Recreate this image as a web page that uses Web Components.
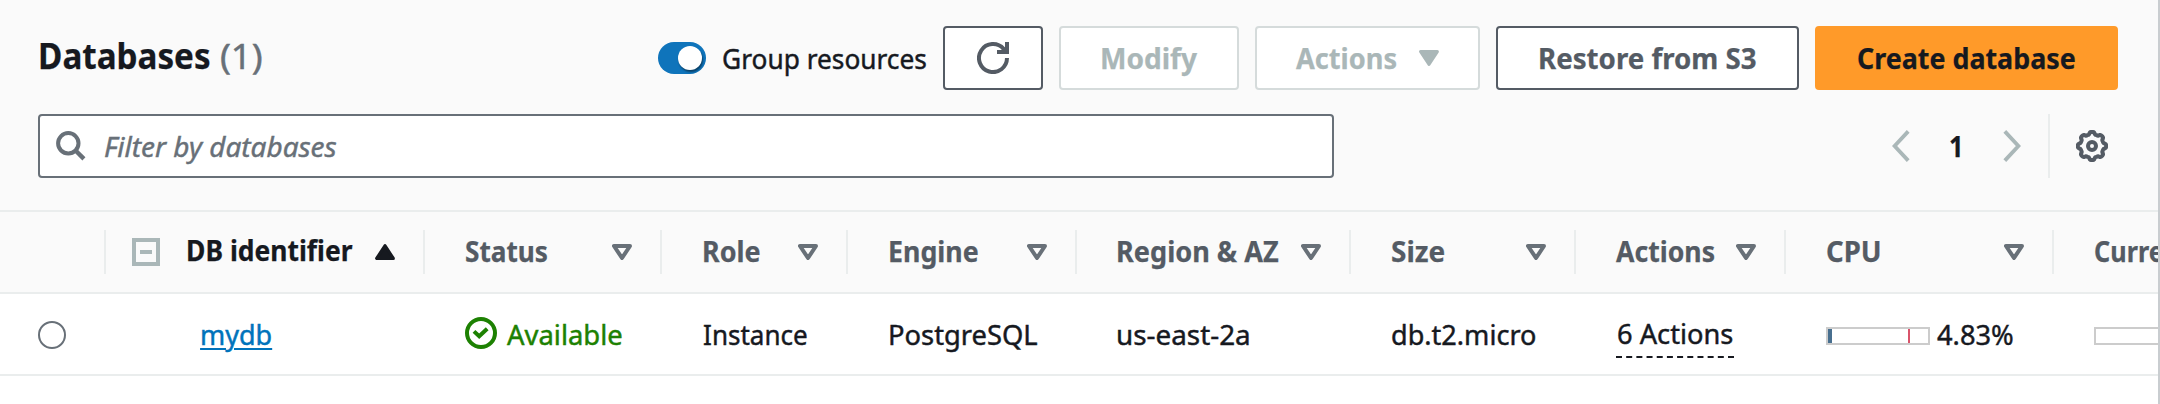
<!DOCTYPE html>
<html lang="en">
<head>
<meta charset="utf-8">
<title>Databases</title>
<style>
html, body { margin: 0; background: #fff; }
body { width: 2160px; height: 404px; overflow: hidden; font: 28px/38px "Noto Sans", "Open Sans", sans-serif; color: #16191f; }
</style>
</head>
<body>
<db-panel></db-panel>
<script>
const define = (name, html, setup) => {
  const template = document.createElement('template');
  template.innerHTML = html;
  customElements.define(name, class extends HTMLElement {
    connectedCallback() {
      if (this.shadowRoot) return;
      this.attachShadow({ mode: 'open' }).append(template.content.cloneNode(true));
      if (setup) setup(this, this.shadowRoot);
    }
  });
};

/* A single-line label condensed or widened so that its ink spans exactly `w` pixels. */
const ctx = document.createElement('canvas').getContext('2d');
define('fit-text', `<style>
  :host { display: inline-block; white-space: nowrap; flex: none; }
  span { display: inline-block; transform-origin: 0 0; -webkit-text-stroke: .45px currentColor; }
  span.bold { -webkit-text-stroke: .25px currentColor; }
  :host([underline]) span { text-decoration: underline; text-decoration-thickness: 2px; text-underline-offset: 3px; }
</style><span><slot></slot></span>`, (host, root) => {
  const cs = getComputedStyle(host), w = +host.getAttribute('w'), span = root.querySelector('span');
  ctx.font = `${cs.fontStyle} ${cs.fontWeight} ${cs.fontSize} ${cs.fontFamily}`;
  const m = ctx.measureText(host.textContent);
  const scale = w / (m.actualBoundingBoxRight + m.actualBoundingBoxLeft);
  host.style.width = w + 'px';
  span.classList.toggle('bold', +cs.fontWeight >= 700);
  span.style.transform = `translateX(${m.actualBoundingBoxLeft * scale}px) scaleX(${scale})`;
});

/* Scalloped ring of the settings gear: eight soft teeth around a 32px box. */
let gear = '';
for (let i = 0; i < 144; i++) {
  const a = i / 144 * Math.PI * 2;
  const r = 12.9 + 1.25 * Math.tanh(2.2 * Math.cos(8 * a));
  gear += (i ? 'L' : 'M') + (16 + r * Math.cos(a)).toFixed(2) + ' ' + (16 + r * Math.sin(a)).toFixed(2);
}

const icons = {
  gear: [32, 32, `<path d="${gear}z" fill="none" stroke="currentColor" stroke-width="4" stroke-linejoin="round"/><circle cx="16" cy="16" r="4" fill="none" stroke="currentColor" stroke-width="4"/>`],
  refresh: [32, 32, '<path d="M30 16A14 14 0 1 1 26.6 6.9L29.5 10" fill="none" stroke="currentColor" stroke-width="4"/><path d="M20 10h10V0" fill="none" stroke="currentColor" stroke-width="4"/>'],
  search: [30, 30, '<circle cx="12.3" cy="12.3" r="10.2" fill="none" stroke="currentColor" stroke-width="4"/><path d="M19.3 19.3l8.6 8.6" stroke="currentColor" stroke-width="4.4"/>'],
  prev: [18, 32, '<path d="M16.2 1.4L2.6 16l13.6 14.6" fill="none" stroke="currentColor" stroke-width="3.8"/>'],
  next: [18, 32, '<path d="M1.8 1.4L15.4 16 1.8 30.6" fill="none" stroke="currentColor" stroke-width="3.8"/>'],
  down: [20, 16, '<path d="M1.6 1.6h16.8L10 14.4z" fill="currentColor" stroke="currentColor" stroke-width="3" stroke-linejoin="round"/>'],
  up: [20, 16, '<path d="M1.6 14.4h16.8L10 1.6z" fill="currentColor" stroke="currentColor" stroke-width="3" stroke-linejoin="round"/>'],
  sort: [20, 16, '<path d="M2 2h16l-8 12z" fill="none" stroke="currentColor" stroke-width="4" stroke-linejoin="round"/>'],
  check: [32, 32, '<circle cx="16" cy="16" r="14" fill="none" stroke="currentColor" stroke-width="4"/><path d="M9 14.4l5.2 4.9 8-7.6" fill="none" stroke="currentColor" stroke-width="4"/>']
};
define('ui-icon', `<style>:host { display: block; flex: none; } svg { display: block; }</style><svg></svg>`, (host, root) => {
  const svg = root.querySelector('svg');
  const [w, h, body] = icons[host.getAttribute('name')];
  svg.setAttribute('viewBox', `0 0 ${w} ${h}`);
  svg.setAttribute('width', w);
  svg.setAttribute('height', h);
  svg.innerHTML = body;
});

define('ui-button', `<style>
  :host { display: flex; box-sizing: border-box; height: 64px; flex: none; align-items: center; justify-content: center; gap: 23px;
    border: 2px solid #545b64; border-radius: 4px; background: #fff; color: #545b64; font-weight: 700; }
  :host([disabled]) { border-color: #d5dbdb; color: #aab7b8; }
  :host([primary]) { border-color: #ff9a29; background: #ff9a29; color: #16191f; }
</style><slot></slot>`);

define('ui-toggle', `<style>
  :host { display: flex; align-items: center; margin-right: 1px; }
  i { box-sizing: border-box; width: 48px; height: 32px; padding: 4px; border-radius: 16px; background: #0f74bb; display: flex; justify-content: flex-end; margin-right: 17px; }
  b { width: 24px; height: 24px; border-radius: 50%; background: #fff; box-shadow: 1px 2px 2px rgba(0,0,0,.45); }
</style><i><b></b></i><slot></slot>`);

define('ui-search', `<style>
  :host { display: flex; align-items: center; box-sizing: border-box; width: 1296px; height: 64px; padding-left: 16px; gap: 19px;
    border: 2px solid #687078; border-radius: 4px; background: #fff; color: #687078; font-style: italic; }
</style><ui-icon name="search"></ui-icon><slot></slot>`);

define('ui-pager', `<style>
  :host { display: flex; align-items: center; height: 64px; color: #aab7b8; }
  fit-text { margin: 0 43px 0 40px; color: #16191f; font-weight: 700; }
  .line { width: 2px; height: 64px; margin: 0 26px 0 27px; background: #eaeded; }
  .gear { color: #545b64; margin-right: 10px; }
</style><ui-icon name="prev"></ui-icon><fit-text w="10">1</fit-text><ui-icon name="next"></ui-icon><span class="line"></span><ui-icon class="gear" name="gear"></ui-icon>`);

define('table-head', `<style>
  :host { display: flex; align-items: center; height: 80px; box-sizing: border-box; padding: 0 0 0 41px; color: #545b64; font-weight: 700; }
  .in { flex: 1; min-width: 0; display: flex; align-items: center; justify-content: space-between; }
  .text { display: flex; align-items: center; margin-top: -2px; }
  ui-icon { color: #687078; margin-right: 28px; }
  .sep { width: 2px; height: 44px; background: #eaeded; flex: none; }
  :host([last]) { overflow: hidden; }
  :host([last]) .sep { display: none; }
  :host([sorted]) { padding-left: 26px; color: #16191f; }
  :host([sorted]) .text { margin-top: -4px; }
  :host([sorted]) ui-icon { color: #16191f; }
</style><div class="in"><div class="text"><slot></slot></div></div><span class="sep"></span>`, (host, root) => {
  if (host.hasAttribute('last') || host.hasAttribute('blank')) return;
  const icon = document.createElement('ui-icon');
  icon.setAttribute('name', host.hasAttribute('sorted') ? 'up' : 'sort');
  root.querySelector('.in').append(icon);
});

define('collapse-box', `<style>
  :host { display: flex; align-items: center; justify-content: center; box-sizing: border-box; width: 28px; height: 28px; border: 4px solid #aab7b8; margin: 4px 28px 0 0; }
  i { width: 12px; height: 4px; background: #aab7b8; }
</style><i></i>`);

define('table-cell', `<style>
  :host { display: flex; align-items: center; height: 80px; box-sizing: border-box; padding-left: 42px; min-width: 0; }
</style><slot></slot>`);

define('radio-dot', `<style>:host { display: block; box-sizing: border-box; width: 28px; height: 28px; border: 2px solid #687078; border-radius: 50%; background: #fff; margin-top: 2px; }</style>`);

define('status-ok', `<style>
  :host { display: flex; align-items: center; gap: 10px; color: #1d8102; }
  ui-icon { margin-top: -2px; }
</style><ui-icon name="check"></ui-icon><slot></slot>`);

define('usage-bar', `<style>
  :host { display: flex; box-sizing: border-box; width: 104px; height: 18px; border: 2px solid #ccc; background: #fff; flex: none; margin: 4px 7px 0 -2px; }
  .used { width: 4px; background: #486f8f; } .limit { width: 2px; margin-left: 76px; background: #d9536a; }
  :host([empty]) i { display: none; }
</style><i class="used"></i><i class="limit"></i>`);

define('db-table', `<style>
  :host { display: block; border-top: 2px solid #eaeded; background: #fff; }
  .row { display: grid; grid-template-columns: 106px 319px 237px 186px 229px 274px 225px 210px 268px 104px; border-bottom: 2px solid #eaeded; }
  .head { background: #fafafa; }
  .link { color: #0073bb; }
  .actions { border-bottom: 2px dashed #16191f; height: 38px; width: 118px; margin: 8px 0 0 -1px; line-height: 30px; }
</style>
<div class="row head">
  <table-head blank></table-head>
  <table-head sorted><collapse-box></collapse-box><fit-text w="165">DB identifier</fit-text></table-head>
  <table-head><fit-text w="81">Status</fit-text></table-head>
  <table-head style="padding-left:42px"><fit-text w="56">Role</fit-text></table-head>
  <table-head style="padding-left:42px"><fit-text w="88">Engine</fit-text></table-head>
  <table-head><fit-text w="160.5">Region &amp; AZ</fit-text></table-head>
  <table-head><fit-text w="52.5">Size</fit-text></table-head>
  <table-head style="padding-left:40px"><fit-text w="98">Actions</fit-text></table-head>
  <table-head><fit-text w="52.5">CPU</fit-text></table-head>
  <table-head last><fit-text w="96">Current</fit-text></table-head>
</div>
<div class="row">
  <table-cell style="padding-left:38px"><radio-dot></radio-dot></table-cell>
  <table-cell style="padding-left:96px"><fit-text class="link" underline w="69">mydb</fit-text></table-cell>
  <table-cell style="padding-left:40px"><status-ok><fit-text w="115">Available</fit-text></status-ok></table-cell>
  <table-cell><fit-text w="103">Instance</fit-text></table-cell>
  <table-cell><fit-text w="147">PostgreSQL</fit-text></table-cell>
  <table-cell style="padding-left:41px"><fit-text w="131">us-east-2a</fit-text></table-cell>
  <table-cell style="padding-left:41px"><fit-text w="143.5">db.t2.micro</fit-text></table-cell>
  <table-cell style="padding-left:41px"><div class="actions"><fit-text w="115" style="margin-left:2px">6 Actions</fit-text></div></table-cell>
  <table-cell><usage-bar></usage-bar><fit-text w="75.5">4.83%</fit-text></table-cell>
  <table-cell><usage-bar empty></usage-bar></table-cell>
</div>`);

define('db-panel', `<style>
  :host { display: block; box-sizing: border-box; width: 2160px; height: 404px; overflow: hidden; border-right: 2px solid #c9cdd0; background: #fff; }
  header { height: 210px; box-sizing: border-box; padding: 26px 40px 0 38px; background: #fafafa; }
  .bar { display: flex; align-items: center; gap: 16px; }
  .title { display: flex; gap: 11px; flex: 1; padding-left: 2px; font-size: 35px; line-height: 48px; margin-top: -4px; }
  .count { color: #687078; }
  .filters { display: flex; justify-content: space-between; margin-top: 24px; }
</style>
<header>
  <div class="bar">
    <div class="title"><fit-text w="170" style="font-weight:700">Databases</fit-text><fit-text class="count" w="41">(1)</fit-text></div>
    <ui-toggle><fit-text w="203.5">Group resources</fit-text></ui-toggle>
    <ui-button style="width:100px"><ui-icon name="refresh"></ui-icon></ui-button>
    <ui-button disabled style="width:180px"><fit-text w="95">Modify</fit-text></ui-button>
    <ui-button disabled style="width:225px"><fit-text w="100">Actions</fit-text><ui-icon name="down"></ui-icon></ui-button>
    <ui-button style="width:303px"><fit-text w="215.5">Restore from S3</fit-text></ui-button>
    <ui-button primary style="width:303px"><fit-text w="217">Create database</fit-text></ui-button>
  </div>
  <div class="filters">
    <ui-search><fit-text w="231.5">Filter by databases</fit-text></ui-search>
    <ui-pager></ui-pager>
  </div>
</header>
<db-table></db-table>`);
</script>
</body>
</html>
